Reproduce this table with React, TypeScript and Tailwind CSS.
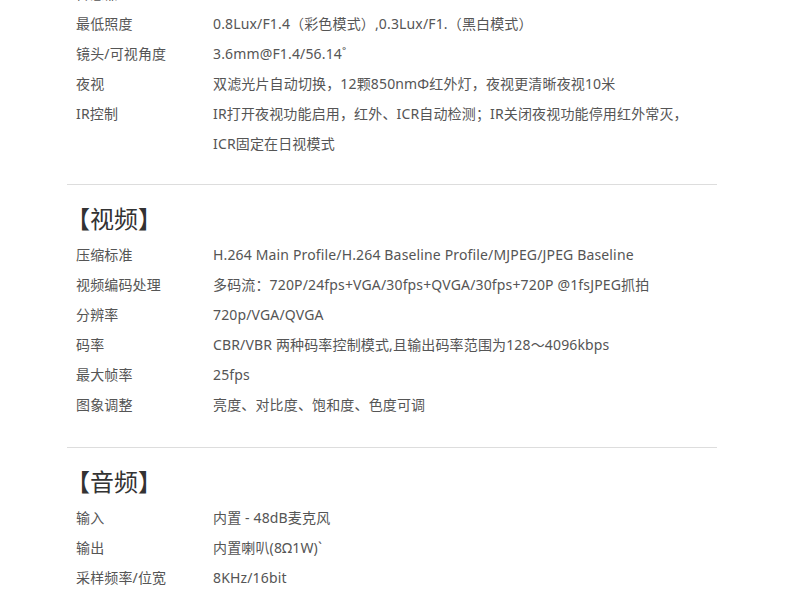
import React from "react";

type Row = [string, string];

const font = { fontFamily: '"Noto Sans", "Noto Sans CJK SC", sans-serif' };

function Rows({ rows }: { rows: Row[] }) {
  return (
    <div className="flex flex-col">
      {rows.map(([k, v], i) => (
        <div key={i} className="flex h-[30px] items-center text-[14px] tracking-[0.15px] text-[#555]">
          <div className="w-[146px] shrink-0 pl-[9px]">{k}</div>
          <div className="whitespace-nowrap">{v}</div>
        </div>
      ))}
    </div>
  );
}

function Heading({ title, h }: { title: string; h: string }) {
  return (
    <div className={h + " pt-[22px]"}>
      <div className="ml-[-1px] text-[24px] leading-[24px] text-[#333]">【{title}】</div>
    </div>
  );
}

export default function App() {
  const top: Row[] = [
    ["传感器", "1/4\" CMOS"],
    ["最低照度", "0.8Lux/F1.4（彩色模式）,0.3Lux/F1.（黑白模式）"],
    ["镜头/可视角度", "3.6mm@F1.4/56.14˚"],
    ["夜视", "双滤光片自动切换，12颗850nmΦ红外灯，夜视更清晰夜视10米"],
    ["IR控制", "IR打开夜视功能启用，红外、ICR自动检测；IR关闭夜视功能停用红外常灭，"],
    ["", "ICR固定在日视模式"],
  ];
  const video: Row[] = [
    ["压缩标准", "H.264 Main Profile/H.264 Baseline Profile/MJPEG/JPEG Baseline"],
    ["视频编码处理", "多码流：720P/24fps+VGA/30fps+QVGA/30fps+720P @1fsJPEG抓拍"],
    ["分辨率", "720p/VGA/QVGA"],
    ["码率", "CBR/VBR 两种码率控制模式,且输出码率范围为128～4096kbps"],
    ["最大帧率", "25fps"],
    ["图象调整", "亮度、对比度、饱和度、色度可调"],
  ];
  const audio: Row[] = [
    ["输入", "内置 - 48dB麦克风"],
    ["输出", "内置喇叭(8Ω1W)`"],
    ["采样频率/位宽", "8KHz/16bit"],
    ["音频压缩", "G.711/G.726"],
  ];
  return (
    <div className="h-[600px] w-[800px] overflow-hidden bg-white" style={font}>
      <div className="ml-[67px] mt-[-22px] w-[650px]">
        <Rows rows={top} />
        <div className="h-[27px] border-b border-[#dddddd]" />
        <Heading title="视频" h="h-[54px]" />
        <Rows rows={video} />
        <div className="h-[29px] border-b border-[#dddddd]" />
        <Heading title="音频" h="h-[54px]" />
        <Rows rows={audio} />
      </div>
    </div>
  );
}
